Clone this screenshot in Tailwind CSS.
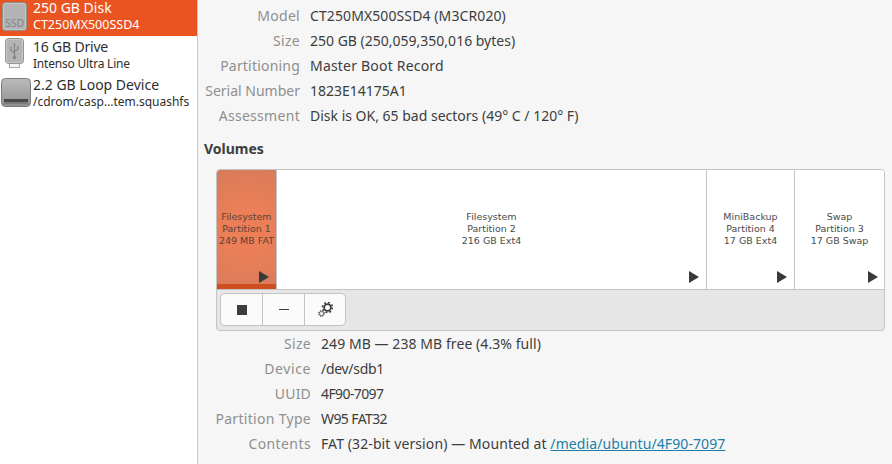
<!DOCTYPE html>
<html lang="en">
<head>
  <meta charset="UTF-8" />
  <title>Disks</title>
  <script src="https://cdn.jsdelivr.net/npm/@tailwindcss/browser@4"></script>
</head>
<body class="w-[892px] h-[464px] overflow-hidden bg-[#f6f6f6] text-[#3d3d3d] font-['Noto_Sans',sans-serif] text-[14px] flex">

  <!-- Device list -->
  <aside class="w-[198px] h-full bg-white border-r border-[#c8c8c8] shrink-0">
    <div class="h-[36px] bg-[#e95420] text-white flex overflow-hidden">
      <svg class="w-[33px] h-[36px] shrink-0" viewBox="0 0 33 36">
        <rect x="2.5" y="2.5" width="24" height="28" rx="3" fill="#b3b3b3" stroke="#8e8e8e"/>
        <rect x="3.5" y="3.5" width="22" height="26" rx="2" fill="none" stroke="#c6c6c6"/>
        <text x="14.5" y="27" text-anchor="middle" font-size="10.5" font-family="Noto Sans" fill="#868686">SSD</text>
      </svg>
      <div>
        <div class="leading-[16px]">250 GB Disk</div>
        <div class="text-[12.5px] leading-[18px]">CT250MX500SSD4</div>
      </div>
    </div>
    <div class="h-[38px] flex">
      <svg class="w-[33px] h-[38px] shrink-0" viewBox="0 0 33 38">
        <rect x="9.5" y="26.5" width="10" height="5" fill="#f4f4f4" stroke="#a8a8a8"/>
        <rect x="5.5" y="2.5" width="18" height="25" rx="3" fill="#b4b4b4" stroke="#939393"/>
        <rect x="6.5" y="3.5" width="16" height="23" rx="2" fill="none" stroke="#c8c8c8"/>
        <path d="M14.5 7v14M11 11v3.5l3.5 2.5M18 10v3l-3.5 2.5" fill="none" stroke="#868686" stroke-width="1.3"/>
        <circle cx="14.5" cy="21.5" r="1.7" fill="#868686"/>
      </svg>
      <div class="mt-[1px]">
        <div class="leading-[19px] text-[#2e2e2e] tracking-[-0.2px]">16 GB Drive</div>
        <div class="text-[12px] leading-[15px] text-[#2e2e2e] tracking-[-0.2px]">Intenso Ultra Line</div>
      </div>
    </div>
    <div class="h-[38px] flex">
      <svg class="w-[33px] h-[38px] shrink-0" viewBox="0 0 33 38">
        <defs>
          <linearGradient id="loopFill" x1="0" y1="0" x2="0" y2="1">
            <stop offset="0" stop-color="#bcbcbc"/>
            <stop offset="1" stop-color="#8e8e8e"/>
          </linearGradient>
        </defs>
        <rect x="1.5" y="4.5" width="29" height="28" rx="4" fill="url(#loopFill)" stroke="#7c7c7c"/>
        <rect x="4" y="25" width="24" height="3" fill="#4a4a4a"/>
        <rect x="4" y="28" width="24" height="2" fill="#7a7a7a"/>
      </svg>
      <div class="mt-[1px]">
        <div class="leading-[19px] text-[#2e2e2e]">2.2 GB Loop Device</div>
        <div class="text-[12px] leading-[15px] text-[#2e2e2e]">/cdrom/casp…tem.squashfs</div>
      </div>
    </div>
  </aside>

  <!-- Disk details -->
  <main class="flex-1 min-w-0">
    <dl class="pt-[3px] grid grid-cols-[102px_1fr] gap-x-[10px] auto-rows-[25px] items-center leading-[25px]">
      <dt class="text-right text-[#8f8f8f] tracking-[0.3px]">Model</dt><dd class="tracking-[0.1px]">CT250MX500SSD4 (M3CR020)</dd>
      <dt class="text-right text-[#8f8f8f] tracking-[0.3px]">Size</dt><dd>250 GB (250,059,350,016 bytes)</dd>
      <dt class="text-right text-[#8f8f8f] tracking-[0.2px]">Partitioning</dt><dd class="tracking-[0.2px]">Master Boot Record</dd>
      <dt class="text-right text-[#8f8f8f]">Serial Number</dt><dd>1823E14175A1</dd>
      <dt class="text-right text-[#8f8f8f] tracking-[0.3px]">Assessment</dt><dd>Disk is OK, 65 bad sectors (49° C / 120° F)</dd>
    </dl>

    <h2 class="font-bold ml-[6px] mt-[11px] leading-[20px]">Volumes</h2>

    <!-- Partition strip -->
    <div class="ml-[18px] mt-[10px] w-[669px] h-[162px] border border-[#c4c4c4] rounded-[4px] overflow-hidden bg-[#e6e6e6]">
      <div class="h-[120px] flex border-b border-[#c4c4c4] bg-white font-['DejaVu_Sans',sans-serif] text-[9.5px] leading-[12px] text-[#4a4a4a] text-center">
        <div class="relative w-[60px] pb-[2px] border-r border-[#c4c4c4] flex items-center justify-center bg-[radial-gradient(circle,#ec7f57_30%,#d87b5b_100%)] text-[#5c4238]">
          <div class="whitespace-nowrap">Filesystem<br>Partition 1<br>249 MB FAT</div>
          <span class="absolute right-[7px] bottom-[6px] border-y-[6px] border-y-transparent border-l-[10px] border-l-[#3a3a3a]"></span>
          <span class="absolute left-0 right-0 bottom-0 h-[5px] bg-[#cf4e1d]"></span>
        </div>
        <div class="relative w-[430px] pb-[2px] border-r border-[#c4c4c4] flex items-center justify-center">
          <div>Filesystem<br>Partition 2<br>216 GB Ext4</div>
          <span class="absolute right-[7px] bottom-[6px] border-y-[6px] border-y-transparent border-l-[10px] border-l-[#3a3a3a]"></span>
        </div>
        <div class="relative w-[88px] pb-[2px] border-r border-[#c4c4c4] flex items-center justify-center">
          <div>MiniBackup<br>Partition 4<br>17 GB Ext4</div>
          <span class="absolute right-[7px] bottom-[6px] border-y-[6px] border-y-transparent border-l-[10px] border-l-[#3a3a3a]"></span>
        </div>
        <div class="relative flex-1 pb-[2px] flex items-center justify-center">
          <div>Swap<br>Partition 3<br>17 GB Swap</div>
          <span class="absolute right-[6px] bottom-[6px] border-y-[6px] border-y-transparent border-l-[10px] border-l-[#3a3a3a]"></span>
        </div>
      </div>
      <div class="pl-[3px] pt-[3px]">
        <div class="inline-flex h-[33px] bg-[#fbfbfb] border border-[#c4c4c4] rounded-[5px]">
          <button class="w-[42px] flex items-center justify-center border-r border-[#c4c4c4]">
            <span class="w-[10px] h-[10px] bg-[#3d3d3d]"></span>
          </button>
          <button class="w-[42px] flex items-center justify-center border-r border-[#c4c4c4]">
            <span class="w-[10px] h-px bg-[#3d3d3d]"></span>
          </button>
          <button class="w-[40px] flex items-center justify-center">
            <svg class="w-[16px] h-[16px]" viewBox="0 0 16 16">
              <circle cx="10.5" cy="5.5" r="3.4" fill="none" stroke="#3d3d3d" stroke-width="1.8"/>
              <circle cx="10.5" cy="5.5" r="5" fill="none" stroke="#3d3d3d" stroke-width="1.6" stroke-dasharray="1.9 2"/>
              <circle cx="4.5" cy="11.5" r="2.1" fill="none" stroke="#555555" stroke-width="1"/>
              <circle cx="4.5" cy="11.5" r="3.1" fill="none" stroke="#555555" stroke-width="1" stroke-dasharray="1.2 1.3"/>
            </svg>
          </button>
        </div>
      </div>
    </div>

    <!-- Selected partition -->
    <dl class="grid grid-cols-[113px_1fr] gap-x-[10px] auto-rows-[25px] items-center leading-[25px]">
      <dt class="text-right text-[#8f8f8f] tracking-[0.3px]">Size</dt><dd class="tracking-[0.07px]">249 MB — 238 MB free (4.3% full)</dd>
      <dt class="text-right text-[#8f8f8f] tracking-[0.6px]">Device</dt><dd class="tracking-[-0.3px]">/dev/sdb1</dd>
      <dt class="text-right text-[#8f8f8f] tracking-[0.2px]">UUID</dt><dd class="tracking-[-0.6px]">4F90-7097</dd>
      <dt class="text-right text-[#8f8f8f] tracking-[0.3px]">Partition Type</dt><dd class="tracking-[-0.6px]">W95 FAT32</dd>
      <dt class="text-right text-[#8f8f8f] tracking-[0.4px]">Contents</dt><dd class="tracking-[0.1px]">FAT (32-bit version) — Mounted at <a href="#" class="text-[#1b7ea8] underline">/media/ubuntu/4F90-7097</a></dd>
    </dl>
  </main>
</body>
</html>
